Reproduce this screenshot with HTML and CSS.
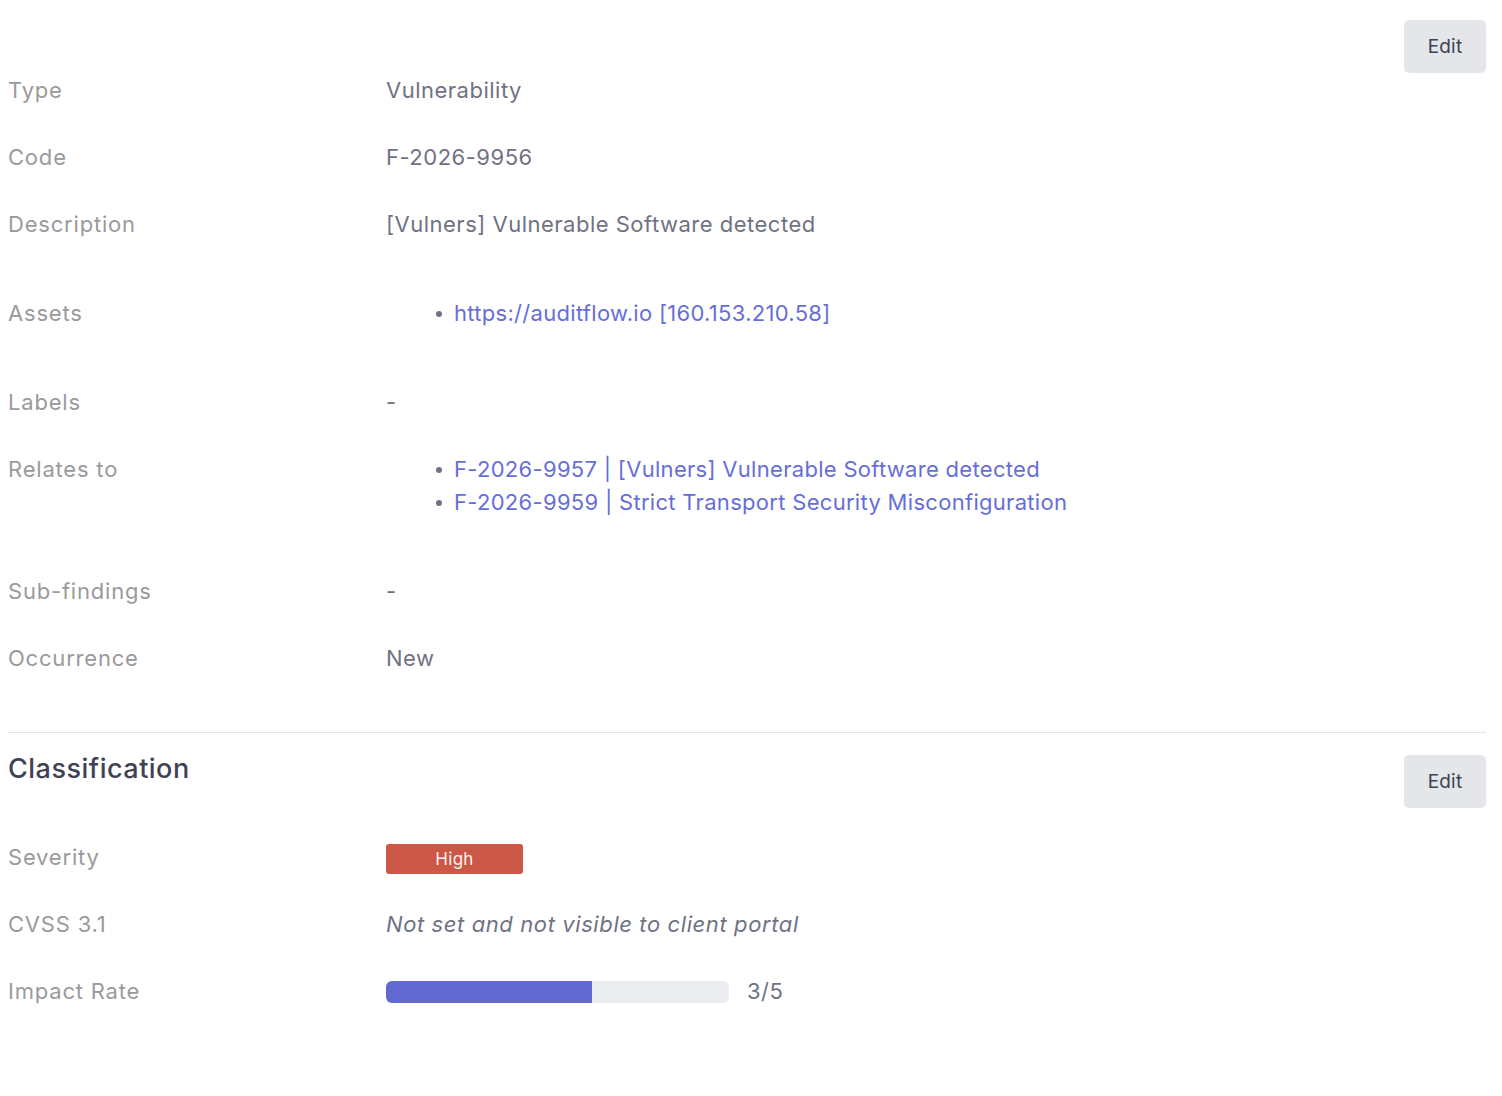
FILE: index.html
```html
<!DOCTYPE html>
<html lang="en">
<head>
<meta charset="utf-8">
<title>Finding details</title>
<link rel="stylesheet" href="styles.css">
</head>
<body>
<main class="page">
  <section class="section section-general">
    <button class="btn-edit" type="button">Edit</button>
    <dl class="rows rows-general">
      <div class="row">
        <dt class="label">Type</dt>
        <dd class="value">Vulnerability</dd>
      </div>
      <div class="row">
        <dt class="label">Code</dt>
        <dd class="value">F-2026-9956</dd>
      </div>
      <div class="row">
        <dt class="label">Description</dt>
        <dd class="value">[Vulners] Vulnerable Software detected</dd>
      </div>
      <div class="row row-list row-centered">
        <dt class="label">Assets</dt>
        <dd class="value">
          <ul class="link-list">
            <li><a class="link" href="#">https://auditflow.io [160.153.210.58]</a></li>
          </ul>
        </dd>
      </div>
      <div class="row">
        <dt class="label">Labels</dt>
        <dd class="value">-</dd>
      </div>
      <div class="row row-list row-top">
        <dt class="label">Relates to</dt>
        <dd class="value">
          <ul class="link-list link-list-tight">
            <li><a class="link" href="#">F-2026-9957 | [Vulners] Vulnerable Software detected</a></li>
            <li><a class="link" href="#">F-2026-9959 | Strict Transport Security Misconfiguration</a></li>
          </ul>
        </dd>
      </div>
      <div class="row">
        <dt class="label">Sub-findings</dt>
        <dd class="value">-</dd>
      </div>
      <div class="row">
        <dt class="label">Occurrence</dt>
        <dd class="value">New</dd>
      </div>
    </dl>
  </section>

  <div class="divider"></div>

  <section class="section section-classification">
    <header class="section-head">
      <h2 class="section-title">Classification</h2>
      <button class="btn-edit" type="button">Edit</button>
    </header>
    <dl class="rows rows-classification">
      <div class="row">
        <dt class="label">Severity</dt>
        <dd class="value"><span class="badge badge-high">High</span></dd>
      </div>
      <div class="row">
        <dt class="label">CVSS 3.1</dt>
        <dd class="value value-muted">Not set and not visible to client portal</dd>
      </div>
      <div class="row">
        <dt class="label">Impact Rate</dt>
        <dd class="value">
          <div class="rate">
            <div class="rate-track"><div class="rate-fill" style="width: 60%"></div></div>
            <span class="rate-text">3/5</span>
          </div>
        </dd>
      </div>
    </dl>
  </section>
</main>
</body>
</html>
```

FILE: styles.css
```css
* {
  box-sizing: border-box;
}

html, body {
  background: #ffffff;
}

body {
  margin: 8px 16px 8px 8px;
  font-family: "Inter", "Open Sans", sans-serif;
  font-size: 22px;
  letter-spacing: 0.5px;
  color: #707384;
}

.page {
  width: 100%;
}

.section-general {
  padding-top: 12px;
}

.section-general::after {
  content: "";
  display: block;
  clear: both;
}

.section-general > .btn-edit {
  float: right;
}

.btn-edit {
  width: 82px;
  height: 53px;
  border: none;
  border-radius: 5px;
  background: #e4e6ea;
  color: #3f4254;
  font-family: inherit;
  font-size: 19px;
  letter-spacing: 0.2px;
  cursor: pointer;
  padding: 0;
}

.rows {
  margin: 0;
}

.rows-general {
  margin-top: 37px;
}

.row {
  display: grid;
  grid-template-columns: 378px 1fr;
  align-items: center;
  padding: 17px 0;
  line-height: 33px;
}

.row-top {
  align-items: start;
}

.label {
  margin: 0;
  color: #9a9a9c;
  letter-spacing: 0.8px;
}

.value {
  margin: 0;
  color: #6f7283;
}

.value-muted {
  font-style: italic;
  letter-spacing: 0.6px;
}

.link-list {
  list-style: none;
  margin: 22px 0;
  padding: 0 0 0 50px;
}

.link-list-tight {
  margin-top: 0;
}

.link-list li {
  display: flex;
  align-items: center;
}

.link-list li::before {
  content: "";
  flex: none;
  width: 6px;
  height: 6px;
  border-radius: 50%;
  background: #6f7282;
  margin-right: 12px;
}

.link {
  color: #666ed9;
  text-decoration: none;
  letter-spacing: 0.3px;
}

.divider {
  height: 1px;
  background: #e6e6e8;
  margin-top: 40px;
}

.section-head {
  display: flex;
  justify-content: space-between;
  align-items: flex-start;
  padding-top: 22px;
}

.section-title {
  margin: 0;
  font-size: 27px;
  font-weight: 500;
  line-height: 28px;
  color: #3f4254;
  letter-spacing: 0.5px;
}

.rows-classification {
  margin-top: 16px;
}

.badge {
  display: inline-block;
  width: 137px;
  height: 30px;
  line-height: 30px;
  text-align: center;
  border-radius: 3px;
  font-size: 17px;
  letter-spacing: 0.3px;
  vertical-align: middle;
}

.badge-high {
  background: #cb5747;
  color: #fdf1ef;
}

.rate {
  display: flex;
  align-items: center;
  gap: 18px;
}

.rate-track {
  width: 343px;
  height: 22px;
  border-radius: 6px;
  background: #ebecf0;
  overflow: hidden;
}

.rate-fill {
  height: 100%;
  background: #6169d1;
}

.rate-text {
  color: #6f7283;
}
```
